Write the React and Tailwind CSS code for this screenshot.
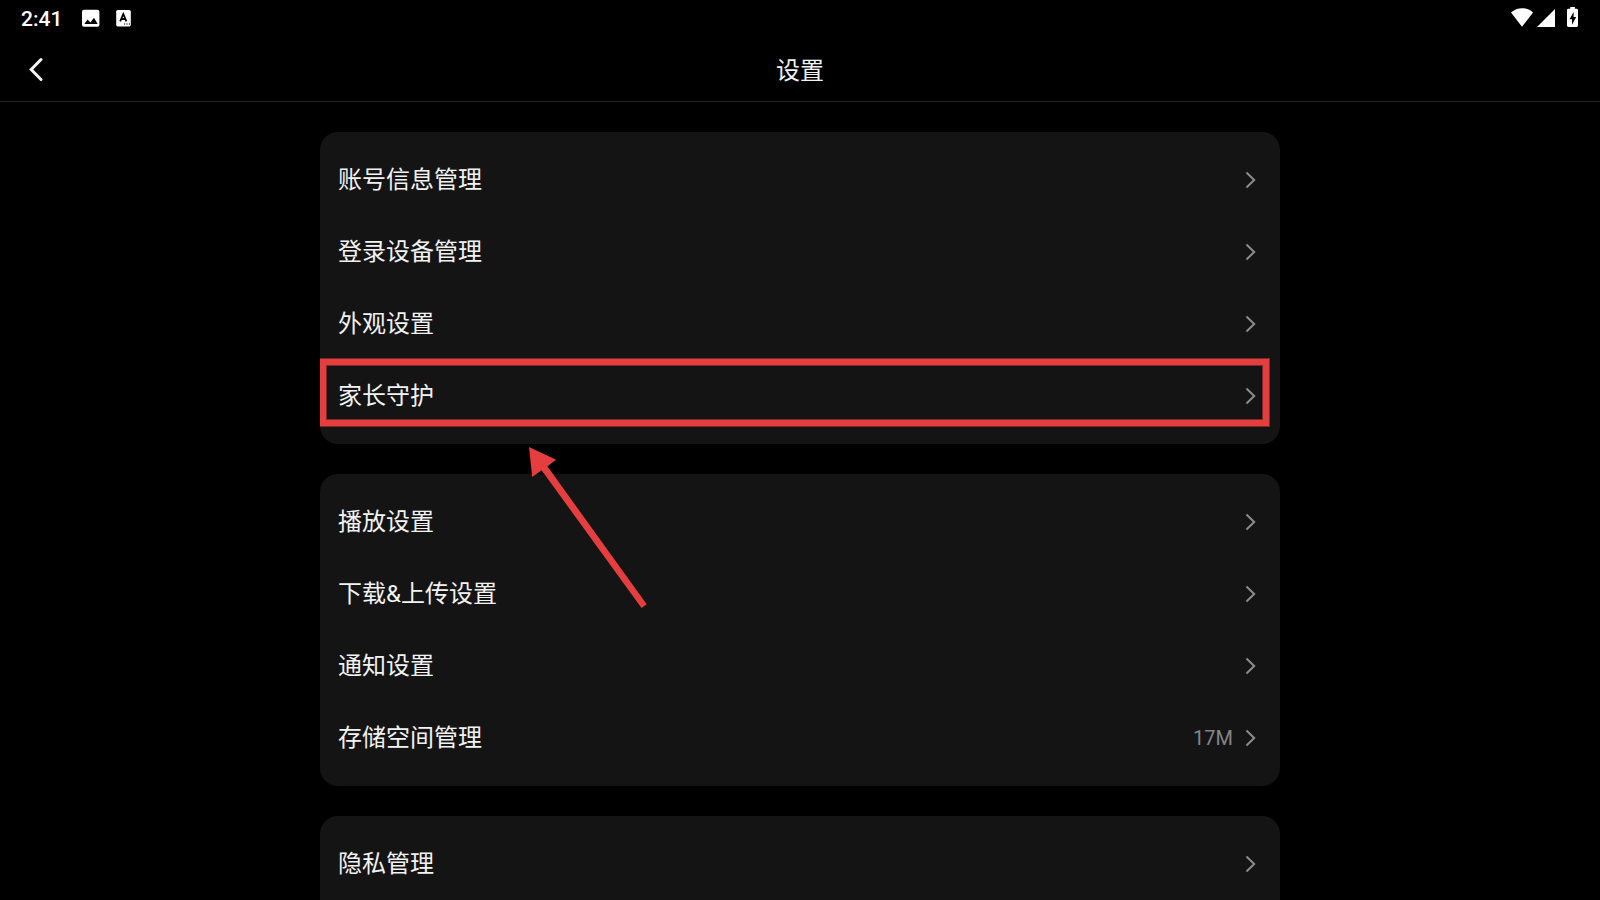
const groups = [
  [
    { label: "账号信息管理" },
    { label: "登录设备管理" },
    { label: "外观设置" },
    { label: "家长守护", highlighted: true },
  ],
  [
    { label: "播放设置" },
    { label: "下载&上传设置" },
    { label: "通知设置" },
    { label: "存储空间管理", value: "17M" },
  ],
  [{ label: "隐私管理" }],
];

function StatusBar() {
  return (
    <div className="flex h-9 shrink-0 items-center justify-between pr-5 pl-[21px]">
      <div className="flex items-center">
        <time className="pt-0.5 text-[21px] leading-6 font-medium">2:41</time>
        <svg className="ml-5 size-[18px]" viewBox="0 0 18 18" aria-hidden="true">
          <rect x="0" y="0.8" width="17.4" height="17" rx="2" fill="#fff" />
          <path d="M2.4 15 5.600 10.400l2.800 3 3.600-4.600 3.700 6.200z" fill="#000" />
        </svg>
        <svg className="ml-4 h-[18px] w-4" viewBox="0 0 16 18" aria-hidden="true">
          <rect x="0.2" y="1" width="14.6" height="16.4" rx="1.6" fill="#fff" />
          <path d="M4.200 12.400 7.300 5 10.400 12.400M5.300 10h4" fill="none" stroke="#000" strokeWidth="1.8" />
          <path d="M8 14.400h1.200v1.200H8zM10.400 14.400h1.200v1.200h-1.200zM12.800 14.400H14v1.200h-1.200z" fill="#000" />
        </svg>
      </div>
      <div className="flex items-center">
        <svg className="h-5 w-6" viewBox="0 0 24 20" aria-hidden="true">
          <path d="M12 18.800 1 4.500C4 1.600 8 .2 12 .2s8 1.400 11 4.300z" fill="#fff" />
        </svg>
        <svg className="ml-[3px] h-5 w-[18px]" viewBox="0 0 18 20" aria-hidden="true">
          <path d="M0 19 18 1v18z" fill="#fff" />
        </svg>
        <svg className="ml-3 h-5 w-[13px] overflow-visible" viewBox="0 0 13 20" aria-hidden="true">
          <path
            d="M3.300-1h4.600v1.700h1.700q1.400 0 1.400 1.400v15.500q0 1.400-1.400 1.400H1.400Q0 19 0 17.600V2.100Q0 .7 1.400.7h1.900z"
            fill="#fff"
          />
          <path d="M6.600 4v5h2.600L5 16.800v-5.500H2.600z" fill="#000" />
        </svg>
      </div>
    </div>
  );
}

function Highlight() {
  return (
    <>
      <span
        aria-hidden="true"
        className="pointer-events-none absolute -top-px right-[11px] bottom-1.5 left-0 border-6 border-[#e53e3e] shadow-[0_0_0_1px_#e53e3e80,inset_0_0_0_1px_#e53e3e80]"
      />
      <svg
        aria-hidden="true"
        className="pointer-events-none absolute top-[86px] left-[208px] z-10 h-[164px] w-[120px]"
        viewBox="0 0 120 164"
        fill="#e53e3e"
      >
        <path d="M1 1 28.200 13.700 19.400 20.300 118.700 158.300 113.500 162 13.600 24.200 4.200 31z" />
      </svg>
    </>
  );
}

function Row({ label, value, highlighted }) {
  return (
    <li className="relative">
      <button
        type="button"
        className="flex h-18 w-full items-center pr-6 pl-[18px] text-left text-2xl text-[#f2f2f2]"
      >
        <span className="flex-1">{label}</span>
        {value && <span className="mr-[11px] text-xl text-[#858585]">{value}</span>}
        <svg
          className="h-[18px] w-3"
          viewBox="0 0 12 18"
          fill="none"
          stroke="#8c8c8c"
          strokeWidth="2"
          aria-hidden="true"
        >
          <path d="m2.500 1.500 7.700 7.500-7.700 7.500" />
        </svg>
      </button>
      {highlighted && <Highlight />}
    </li>
  );
}

export default function App() {
  return (
    <div className="flex h-screen flex-col overflow-hidden bg-black font-[Roboto,'Noto_Sans_CJK_SC',sans-serif] text-white">
      <StatusBar />
      <header className="grid h-[66px] shrink-0 grid-cols-[1fr_auto_1fr] items-center border-b border-[#222] px-6">
        <button type="button" aria-label="返回" className="flex size-6 items-center justify-center">
          <svg
            className="size-6"
            viewBox="0 0 24 24"
            fill="none"
            stroke="#f5f5f5"
            strokeWidth="3"
            strokeLinecap="round"
            aria-hidden="true"
          >
            <path d="M17 2.500 7.200 12.500l9.800 10" />
          </svg>
        </button>
        <h1 className="pt-1 text-2xl text-[#f2f2f2]">设置</h1>
      </header>
      <main className="mx-auto flex min-h-0 w-3/5 flex-1 flex-col gap-[30px] overflow-hidden pt-[30px]">
        {groups.map((rows) => (
          <ul
            key={rows[0].label}
            className="shrink-0 rounded-[18px] bg-[#141414] py-3 last:rounded-b-none"
          >
            {rows.map((row) => (
              <Row key={row.label} {...row} />
            ))}
          </ul>
        ))}
      </main>
    </div>
  );
}
